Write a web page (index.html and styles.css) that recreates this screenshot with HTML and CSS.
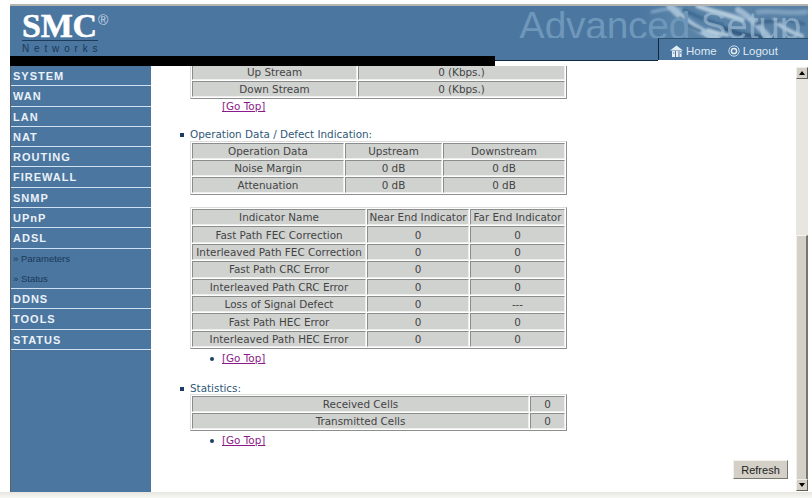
FILE: index.html
```html
<!DOCTYPE html>
<html lang="en">
<head>
<meta charset="utf-8">
<title>Advanced Setup</title>
<link rel="stylesheet" href="styles.css">
</head>
<body>
<div class="window">
  <header class="header">
    <div class="logo">
      <div class="logo-mark">SMC<sup class="reg">®</sup></div>
      <div class="logo-sub">Networks</div>
    </div>
    <div class="banner">
      <svg class="banner-art" viewBox="0 0 170 33" width="170" height="33" aria-hidden="true">
        <defs>
          <filter id="soft"><feGaussianBlur stdDeviation="1"/></filter>
          <linearGradient id="wash" x1="0" x2="1" y1="0" y2="0">
            <stop offset="0" stop-color="#5a84a8" stop-opacity="0"/>
            <stop offset="0.2" stop-color="#5a84a8" stop-opacity=".9"/>
            <stop offset="1" stop-color="#5a82a6" stop-opacity=".9"/>
          </linearGradient>
        </defs>
        <rect width="170" height="33" fill="url(#wash)"/>
        <g filter="url(#soft)" fill="none" stroke-linecap="round">
          <path d="M14 6C24 3 32 2 44 3" stroke="#7fa3c2" stroke-width="3"/>
          <path d="M32 0C42 10 56 24 78 31" stroke="#a4c0d6" stroke-width="7"/>
          <path d="M42 12C48 18 54 22 62 25" stroke="#3f6c93" stroke-width="3"/>
          <path d="M46 4C58 10 70 16 84 19" stroke="#3f6c93" stroke-width="4"/>
          <path d="M60 0C74 6 90 8 104 14" stroke="#b4cadc" stroke-width="5"/>
          <path d="M70 24C76 26 82 28 90 29" stroke="#bcd0e0" stroke-width="3"/>
          <path d="M86 22C98 28 112 30 124 31" stroke="#30597f" stroke-width="4"/>
          <path d="M100 4C112 10 120 20 130 30" stroke="#9db9d1" stroke-width="6"/>
          <path d="M120 6C134 4 150 8 168 6" stroke="#7d9fbd" stroke-width="5"/>
          <path d="M136 14C144 22 152 26 164 30" stroke="#aac3d8" stroke-width="4"/>
          <path d="M118 18C126 16 132 14 140 16" stroke="#3a6489" stroke-width="3"/>
          <path d="M150 14L166 18" stroke="#3e688d" stroke-width="3"/>
        </g>
      </svg>
      <div class="banner-title">Advanced <span class="banner-ghost">Setup</span></div>
    </div>
    <nav class="topnav">
      <a class="topnav-link" href="#home">
        <svg class="topnav-icon" viewBox="0 0 13 12" width="13" height="12" aria-hidden="true">
          <path d="M0 5.5L6.5 0.5L13 5.5Z" fill="#e4edf4"/>
          <path d="M2 6H5V12H2ZM6 6H8.5V12H6ZM9.5 6H11.5V12H9.5Z" fill="#e4edf4"/>
          <path d="M3 8H4.3M10 8H11" stroke="#4a76a0"/>
        </svg>Home</a>
      <a class="topnav-link" href="#logout">
        <svg class="topnav-icon" viewBox="0 0 12 12" width="12" height="12" aria-hidden="true">
          <circle cx="6" cy="6" r="5.2" fill="none" stroke="#c9d9e7" stroke-width="1"/>
          <circle cx="6" cy="6" r="2.6" fill="none" stroke="#e4edf4" stroke-width="1.5"/>
        </svg>Logout</a>
    </nav>
  </header>
  <div class="strip">
    <div class="strip-black"></div>
    <div class="strip-rest"></div>
  </div>
  <div class="main">
    <aside class="sidebar">
      <a class="side-item" href="#system">SYSTEM</a>
      <a class="side-item" href="#wan">WAN</a>
      <a class="side-item" href="#lan">LAN</a>
      <a class="side-item" href="#nat">NAT</a>
      <a class="side-item" href="#routing">ROUTING</a>
      <a class="side-item" href="#firewall">FIREWALL</a>
      <a class="side-item" href="#snmp">SNMP</a>
      <a class="side-item" href="#upnp">UPnP</a>
      <a class="side-item" href="#adsl">ADSL</a>
      <a class="side-sub" href="#parameters">» Parameters</a>
      <a class="side-sub side-sub-last" href="#status">» Status</a>
      <a class="side-item" href="#ddns">DDNS</a>
      <a class="side-item" href="#tools">TOOLS</a>
      <a class="side-item" href="#status2">STATUS</a>
    </aside>
    <section class="content">
      <table class="grid grid-rate">
        <colgroup><col class="rate-a"><col class="rate-b"></colgroup>
        <tr><td>Up Stream</td><td>0 (Kbps.)</td></tr>
        <tr><td>Down Stream</td><td>0 (Kbps.)</td></tr>
      </table>
      <p class="gotop gotop-plain"><a href="#top">[Go Top]</a></p>

      <ul class="sec sec-op"><li>Operation Data / Defect Indication:</li></ul>
      <table class="grid">
        <colgroup><col class="op-a"><col class="op-b"><col class="op-c"></colgroup>
        <tr><td>Operation Data</td><td>Upstream</td><td>Downstream</td></tr>
        <tr><td>Noise Margin</td><td>0 dB</td><td>0 dB</td></tr>
        <tr><td>Attenuation</td><td>0 dB</td><td>0 dB</td></tr>
      </table>

      <table class="grid grid-ind">
        <colgroup><col class="ind-a"><col class="ind-b"><col class="ind-c"></colgroup>
        <tr><td>Indicator Name</td><td>Near End Indicator</td><td>Far End Indicator</td></tr>
        <tr><td>Fast Path FEC Correction</td><td>0</td><td>0</td></tr>
        <tr><td>Interleaved Path FEC Correction</td><td>0</td><td>0</td></tr>
        <tr><td>Fast Path CRC Error</td><td>0</td><td>0</td></tr>
        <tr><td>Interleaved Path CRC Error</td><td>0</td><td>0</td></tr>
        <tr><td>Loss of Signal Defect</td><td>0</td><td>---</td></tr>
        <tr><td>Fast Path HEC Error</td><td>0</td><td>0</td></tr>
        <tr><td>Interleaved Path HEC Error</td><td>0</td><td>0</td></tr>
      </table>
      <ul class="gotop-list"><li><a href="#top">[Go Top]</a></li></ul>

      <ul class="sec sec-stat"><li>Statistics:</li></ul>
      <table class="grid">
        <colgroup><col class="st-a"><col class="st-b"></colgroup>
        <tr><td>Received Cells</td><td>0</td></tr>
        <tr><td>Transmitted Cells</td><td>0</td></tr>
      </table>
      <ul class="gotop-list"><li><a href="#top">[Go Top]</a></li></ul>

      <div class="actions"><button class="refresh" type="button">Refresh</button></div>
    </section>
    <div class="scrollbar" aria-hidden="true">
      <div class="sb-btn"><span class="arrow-up"></span></div>
      <div class="sb-track"></div>
      <div class="sb-thumb"></div>
      <div class="sb-btn"><span class="arrow-down"></span></div>
    </div>
  </div>
</div>
<div class="page-foot"></div>
</body>
</html>
```
FILE: styles.css
```css
* { box-sizing: border-box; }
html, body { margin: 0; height: 498px; overflow: hidden; background: #fff; }
body { display: flex; flex-direction: column; font-family: "DejaVu Sans", Verdana, sans-serif; }

.window { width: 798px; height: 488px; margin: 4px 0 0 10px; display: flex; flex-direction: column; position: relative; border-top: 2px solid #b4b4b0; flex: none; }
.page-foot { height: 6px; background: linear-gradient(#e6e5de, #f8f8f5); flex: none; }

.header { height: 50px; background: #4a76a0; display: flex; overflow: hidden; }
.logo { width: 160px; padding: 8px 0 0 12px; color: #fff; }
.logo-mark { font: bold 34px/24px "Liberation Serif", serif; -webkit-text-stroke: 0.5px #fff; letter-spacing: -0.2px; width: 76px; height: 27px; border-bottom: 1px solid #1d3b5a; white-space: nowrap; }
.reg { font: 300 14px/12px "Liberation Sans", sans-serif; -webkit-text-stroke: 0; color: #c5d6e5; vertical-align: top; margin-left: 1px; }
.logo-sub { font: 10px/11px "Liberation Sans", sans-serif; letter-spacing: 4.85px; color: #1b3857; padding-top: 2px; white-space: nowrap; }

.banner { flex: 1; position: relative; overflow: hidden; padding: 0 0 0 349px; }
.banner-art { position: absolute; right: 0; top: 0; }
.banner-title { position: relative; height: 32px; overflow: hidden; font: 39px/39px "Liberation Sans", sans-serif; letter-spacing: -0.3px; color: #6f97ba; white-space: nowrap; }
.banner-ghost { color: #a9c4da; opacity: .6; }

.topnav { position: absolute; top: 32px; right: 0; width: 150px; height: 22px; background: #4a76a0; border-left: 1px solid #12263c; border-top: 1px solid #2e5170; display: flex; align-items: center; gap: 11px; padding: 2px 0 0 11px; z-index: 2; }
.topnav-link { display: flex; align-items: center; gap: 3px; font: 11.5px "Liberation Sans", sans-serif; color: #dfe9f2; text-decoration: none; }

.strip { height: 10px; display: flex; flex: none; }
.strip-black { width: 485px; background: #000; }
.strip-rest { flex: 1; border-top: 4px solid #4a76a0; }
.strip-rest::before { content: ""; display: block; width: 163px; height: 1px; background: #12263c; }

.main { flex: 1; min-height: 0; display: flex; }

.sidebar { width: 141px; background: #4a76a0; border-left: 1px solid #55606c; display: flex; flex-direction: column; }
.side-item { height: 20.3px; padding-left: 2px; border-bottom: 1px solid #cfe0f0; font: bold 11px/21px "Liberation Sans", sans-serif; letter-spacing: 1px; color: #eaf1f8; text-decoration: none; flex: none; }
.side-sub { height: 20px; font: 9.5px/20px "Liberation Sans", sans-serif; padding-left: 2px; color: #1b3857; text-decoration: none; flex: none; }
.side-sub-last { height: 20.3px; border-bottom: 1px solid #cfe0f0; }

.content { flex: 1; min-width: 0; overflow: hidden; display: flex; flex-direction: column; padding: 0 0 0 39px; font-size: 10.4px; color: #333; }

.grid { width: 377px; table-layout: fixed; border-collapse: separate; border-spacing: 1px; border: 1px solid; border-color: #dcdcdc #8e8e8e #8e8e8e #dcdcdc; flex: none; }
.grid td { height: 16px; padding: 0; text-align: center; background: #d0d2d0; border: 1px solid; border-color: #8c8c8c #eeeeee #eeeeee #8c8c8c; color: #444; font-size: 10.4px; line-height: 14px; overflow: hidden; white-space: nowrap; }
.grid-rate { margin-top: -4px; }
.grid-ind { margin-top: 12px; }
.grid-ind td { height: 16.4px; }

.rate-a { width: 165px; } .rate-b { width: 207px; }
.op-a { width: 152px; } .op-b { width: 97px; } .op-c { width: 122px; }
.ind-a { width: 174px; } .ind-b { width: 102px; } .ind-c { width: 95px; }
.st-a { width: 337px; } .st-b { width: 35px; }

a { color: #8a1a88; }
.gotop { margin: 0; padding: 0 0 0 32px; line-height: 14px; }
.gotop-list { margin: 0; padding: 2px 0 0 32px; list-style: none; line-height: 14px; }
.gotop-list li::before { content: ""; display: inline-block; width: 4px; height: 4px; border-radius: 50%; background: #1f3f66; margin: 0 8px 1px -12px; vertical-align: middle; }
.sec { margin: 0; padding: 0; list-style: none; line-height: 13px; color: #2f5878; }
.sec li::before { content: ""; display: inline-block; width: 4px; height: 4px; background: #1d3b68; margin: 0 6px 1px -10px; vertical-align: middle; }
.sec-op { margin-top: 10px; padding-top: 5px; }
.sec-stat { margin-top: 17px; line-height: 12px; }

.actions { margin-top: 13px; display: flex; justify-content: flex-end; padding-right: 8px; }
.refresh { width: 55px; height: 19px; padding: 0; font: 11px "Liberation Sans", sans-serif; color: #222; background: #d4d0c8; border: 1px solid; border-color: #f2f1ec #77766f #77766f #f2f1ec; }

.scrollbar { width: 12px; flex: none; display: flex; flex-direction: column; margin-top: 1px; padding-bottom: 1px; }
.sb-btn { height: 12px; flex: none; background: #d4d0c8; border: 1px solid; border-color: #eeeeea #5f5f5a #5f5f5a #eeeeea; display: flex; align-items: center; justify-content: center; }
.sb-track { height: 156px; flex: none; background: #e8e6e0; }
.sb-thumb { flex: 1; background: #d4d0c8; border-right: 2px solid #77766f; border-top: 1px solid #f4f4f0; border-left: 1px solid #f0efe9; }
.arrow-up { border: 3.5px solid transparent; border-top: 0; border-bottom: 4px solid #000; }
.arrow-down { border: 3.5px solid transparent; border-bottom: 0; border-top: 4px solid #000; }
```
